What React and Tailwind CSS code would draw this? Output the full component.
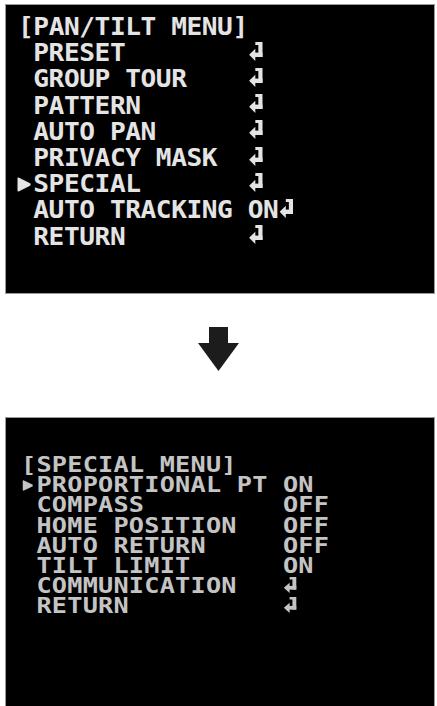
import React from "react";

function Enter({ className = "" }) {
  return (
    <svg viewBox="0 0 15 19" className={className} fill="currentColor" preserveAspectRatio="none">
      <rect x="9.8" y="0" width="4.4" height="15" />
      <rect x="6.6" y="0" width="4" height="3" />
      <rect x="4.5" y="10.6" width="9.7" height="4.4" />
      <polygon points="0,12.8 6.6,6.8 6.6,19" />
    </svg>
  );
}

function Marker({ className = "" }) {
  return (
    <svg viewBox="0 0 14 15" className={className} fill="currentColor" preserveAspectRatio="none">
      <path d="M0.6 1.6 Q0.6 0 2.2 0.7 L13.2 6.3 Q14.4 7.5 13.2 8.7 L2.2 14.3 Q0.6 15 0.6 13.4 Z" />
    </svg>
  );
}

const topRows = [
  { label: "PRESET", value: "", enter: true },
  { label: "GROUP TOUR", value: "", enter: true },
  { label: "PATTERN", value: "", enter: true },
  { label: "AUTO PAN", value: "", enter: true },
  { label: "PRIVACY MASK", value: "", enter: true },
  { label: "SPECIAL", value: "", enter: true, sel: true },
  { label: "AUTO TRACKING", value: "ON", enter: true },
  { label: "RETURN", value: "", enter: true },
];

const bottomRows = [
  { label: "PROPORTIONAL PT", value: "ON", sel: true },
  { label: "COMPASS", value: "OFF" },
  { label: "HOME POSITION", value: "OFF" },
  { label: "AUTO RETURN", value: "OFF" },
  { label: "TILT LIMIT", value: "ON" },
  { label: "COMMUNICATION", value: "", enter: true },
  { label: "RETURN", value: "", enter: true },
];

const mono = { fontFamily: '"DejaVu Sans Mono", "Liberation Mono", monospace' };

export default function App() {
  return (
    <div className="w-[437px] h-[706px] bg-white overflow-hidden flex flex-col">
      {/* Top panel */}
      <div className="mt-[4px] ml-[5px] w-[430px] h-[290px] shrink-0 bg-black border border-[#9a9a9a] pt-[9px] pl-[12px] overflow-hidden">
        <div
          className="origin-top-left scale-x-[1.09] text-[#e4e4e4] font-bold text-[24px] leading-[26.2px] tracking-[-0.4px]"
          style={mono}
        >
          <div className="whitespace-pre">[PAN/TILT MENU]</div>
          {topRows.map((r) => (
            <div key={r.label} className="flex items-center h-[26.2px]">
              <div className="w-[14.05px] shrink-0 flex items-center">
                {r.sel && <Marker className="w-[12.8px] h-[15px] shrink-0 -ml-[1px]" />}
              </div>
              <div className="w-[196.7px] shrink-0 whitespace-pre">{r.label}</div>
              <div className="flex items-center whitespace-pre">
                {r.value}
                {r.enter && <Enter className="w-[13px] h-[19px] shrink-0 ml-[1px] -mt-[4px]" />}
              </div>
            </div>
          ))}
        </div>
      </div>

      {/* Arrow */}
      <div className="h-[123px] shrink-0 flex justify-center pt-[33px]">
        <svg viewBox="0 0 41 44" className="w-[41px] h-[44px] text-[#1c1c1c]" fill="currentColor">
          <rect x="11" y="0" width="19" height="17" />
          <polygon points="0,16 41,16 20.5,44" />
        </svg>
      </div>

      {/* Bottom panel */}
      <div className="ml-[5px] w-[430px] h-[300px] shrink-0 bg-black border border-[#9a9a9a] pt-[37px] pl-[15px] overflow-hidden">
        <div
          className="origin-top-left scale-x-[1.2] text-[#c4c4c4] font-bold text-[21px] leading-[20.2px] tracking-[0.2px]"
          style={mono}
        >
          <div className="whitespace-pre">[SPECIAL MENU]</div>
          {bottomRows.map((r) => (
            <div key={r.label} className="flex items-center h-[20.2px]">
              <div className="w-[12.84px] shrink-0 flex items-center">
                {r.sel && <Marker className="w-[9px] h-[11px] shrink-0 ml-[1px]" />}
              </div>
              <div className="w-[205.44px] shrink-0 whitespace-pre">{r.label}</div>
              <div className="flex items-center whitespace-pre">
                {r.value}
                {r.enter && <Enter className="w-[11px] h-[16px] shrink-0 ml-[1px] -mt-[2px]" />}
              </div>
            </div>
          ))}
        </div>
      </div>
    </div>
  );
}
